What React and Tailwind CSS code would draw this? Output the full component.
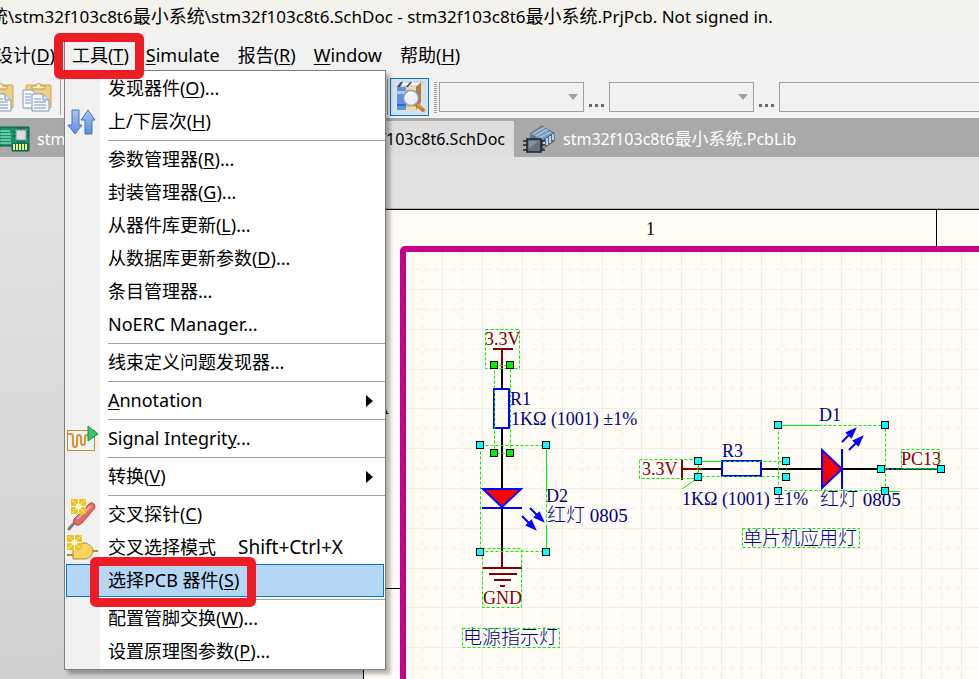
import React from "react";

const sans = "font-['Noto_Sans','Noto_Sans_CJK_SC',sans-serif]";

function PasteIcon() {
  return (
    <svg width="30" height="30" viewBox="0 0 30 30" aria-hidden="true">
      <rect x="4" y="3" width="25" height="23" rx="1" fill="#ecd27e" stroke="#cda94e" />
      <path d="M10 7V4h4a2.500 2.500 0 0 1 5 0h4v3z" fill="#f8edc4" stroke="#b99a50" />
      <path d="M1 8h9l4 4v14H1z" fill="#f6f9fd" stroke="#8496b8" />
      <path d="M3 12h6M3 15h6M3 18h6M3 21h6" stroke="#7d93b8" />
      <path d="M10 12h11l6 6v11H10z" fill="#f3f8fe" stroke="#8496b8" />
      <path d="M21 12v6h6" fill="#d5e2f4" stroke="#8496b8" />
      <path d="M12 17h7M12 20h12M12 23h12M12 26h12" stroke="#7d93b8" />
    </svg>
  );
}

function BooksIcon() {
  return (
    <svg width="32" height="32" viewBox="0 0 32 32" aria-hidden="true">
      <path d="M3 5l4-4h22l-3 4z" fill="#fff" stroke="#b9c4d2" />
      <path d="M22 6l5-5v20l-5 8z" fill="#b07a40" />
      <rect x="3" y="6" width="9" height="23" fill="#5f93dd" />
      <path d="M3 6l4-5h2l-3 5zM12 6l4-5h2l-4 5z" fill="#334a66" />
      <rect x="3" y="10" width="9" height="3" fill="#a9caf5" />
      <rect x="3" y="23" width="9" height="2" fill="#2b66c4" />
      <rect x="12" y="6" width="10" height="23" fill="#f1dc98" />
      <path d="M12 10h10M12 12h10M12 25h10" stroke="#c9a653" />
      <path d="M22 23l7 6" stroke="#c77b24" strokeWidth="4" strokeLinecap="round" />
      <path d="M23 23l5 4" stroke="#f5b65b" strokeWidth="1" />
      <circle cx="17" cy="17" r="7.500" fill="#e9f4fe" stroke="#8fa0b4" strokeWidth="1.500" />
      <path d="M12 16a5 5 0 0 1 6-4" stroke="#fff" strokeWidth="2" fill="none" />
    </svg>
  );
}

function BoardIcon() {
  return (
    <svg width="30" height="26" viewBox="0 0 30 26" className="shrink-0" aria-hidden="true">
      <path d="M0 1h29v24H12v-5H0z" fill="#12956a" stroke="#0a5d43" />
      <path d="M0 5h10M0 8h11M0 11h11M0 14h11M0 17h11" stroke="#c4f1da" />
      <path d="M18 1v4M21 1v4M24 1v4M18 13v4M21 13v4M24 13v4M13 6h3M13 10h3M26 6h3M26 10h3" stroke="#07503a" />
      <rect x="16" y="4" width="10" height="10" fill="#d9dde0" stroke="#8a9297" />
      <rect x="12" y="17" width="17" height="8" fill="#0b6e4e" />
      <path d="M14 18v6M17 18v6M20 18v6M23 18v6M26 18v6" stroke="#f1ef8b" strokeWidth="2" />
    </svg>
  );
}

function LibraryIcon() {
  return (
    <svg width="34" height="28" viewBox="0 0 34 28" aria-hidden="true">
      <path d="M8 9l12-8 12 7-12 8z" fill="#7f9db4" stroke="#4f6a80" />
      <path d="M11 9l12-7M14 11l12-7M17 13l12-6" stroke="#b9d0e0" />
      <path d="M20 16l12-8v8l-12 8z" fill="#5c7a92" stroke="#3d5567" />
      <path d="M22 15v7M25 13v7M28 11v7M31 9v6" stroke="#d9edf8" strokeWidth="1.500" />
      <path d="M8 9v5l12 4v-2z" fill="#5c7a92" />
      <path d="M1 16h22M1 20h22M1 25h22" stroke="#1d2226" strokeWidth="1.500" />
      <rect x="5" y="14" width="14" height="13" fill="#65727c" stroke="#1d2226" strokeWidth="1.500" />
      <path d="M7 16h10l-10 7z" fill="#87949d" />
    </svg>
  );
}

function LevelsIcon() {
  return (
    <svg width="30" height="28" viewBox="0 0 30 28" aria-hidden="true">
      <defs>
        <linearGradient id="arrows" x1="0" y1="0" x2="0" y2="1">
          <stop offset="0" stopColor="#a8c4f0" />
          <stop offset="1" stopColor="#5b8de0" />
        </linearGradient>
      </defs>
      <path d="M5 2h7v15h3l-7 9-7-9h4z" fill="url(#arrows)" stroke="#4a72b8" />
      <path d="M18 26V12h-4l7-10 7 10h-3v14z" fill="url(#arrows)" stroke="#4a72b8" />
    </svg>
  );
}

function SignalIcon() {
  return (
    <svg width="32" height="28" viewBox="0 0 32 28" aria-hidden="true">
      <rect x="1.500" y="5.500" width="27" height="20" fill="#eef2f6" stroke="#cf8a2e" />
      <path d="M2 9h3q2 0 2 3v7q0 3 2 3t2-3v-6q0-3 2-3t2 3v4q0 3 2 3t2-3v-4q0-3 2-3t2 2h5" fill="none" stroke="#d4942e" strokeWidth="2" />
      <path d="M22 1l10 8-10 7z" fill="#35c768" stroke="#1b8f44" />
    </svg>
  );
}

function Spark() {
  return (
    <g>
      <rect width="15" height="15" fill="#e6c52e" />
      <path d="M1 1l13 13M14 1L1 14" stroke="#f9eb9c" />
      <path d="M7.500 0v15M0 7.500h15" stroke="#fffbe0" />
      <circle cx="7.500" cy="7.500" r="3" fill="#fff8cf" />
    </g>
  );
}

function ProbeIcon() {
  return (
    <svg width="30" height="32" viewBox="0 0 30 32" aria-hidden="true">
      <path d="M2 30l6-7" stroke="#7d7d7d" strokeWidth="3" strokeLinecap="round" />
      <path d="M7 20L22 5q3-3 5 0t0 5L15 24q-3 3-6 2-4-2-2-6z" fill="#e46a66" stroke="#b8443f" />
      <path d="M10 20L24 7" stroke="#f7aaa5" strokeWidth="2" />
      <g transform="translate(4 0)"><Spark /></g>
    </svg>
  );
}

function GateIcon() {
  return (
    <svg width="32" height="30" viewBox="0 0 32 30" aria-hidden="true">
      <path d="M1 22h6M25 18h7" stroke="#b58a2c" strokeWidth="2" />
      <path d="M7 10h13q7 3 7 8t-7 8H7z" fill="#fbd561" stroke="#b58a2c" />
      <g transform="translate(1 2)"><Spark /></g>
    </svg>
  );
}

/* Window captions set Latin letters one pixel smaller than Han characters. */
function Caption({ parts, han }) {
  return parts.map((part, i) =>
    i % 2 ? <span key={i} className={han}>{part}</span> : part
  );
}

function Hot({ text, k, tail = "" }) {
  return (
    <span className="whitespace-pre">
      {text}
      {k && <u className="decoration-1 underline-offset-2">{k}</u>}
      {tail}
    </span>
  );
}

const groups = [
  [
    { text: "发现器件(", k: "O", tail: ")..." },
    { text: "上/下层次(", k: "H", tail: ")", icon: <LevelsIcon /> },
  ],
  [
    { text: "参数管理器(", k: "R", tail: ")..." },
    { text: "封装管理器(", k: "G", tail: ")..." },
    { text: "从器件库更新(", k: "L", tail: ")..." },
    { text: "从数据库更新参数(", k: "D", tail: ")..." },
    { text: "条目管理器..." },
    { text: "NoERC Manager..." },
  ],
  [{ text: "线束定义问题发现器..." }],
  [{ text: "", k: "A", tail: "nnotation", sub: true }],
  [{ text: "Signal Integrit", k: "y", tail: "...", icon: <SignalIcon /> }],
  [{ text: "转换(", k: "V", tail: ")", sub: true }],
  [
    { text: "交叉探针(", k: "C", tail: ")", icon: <ProbeIcon /> },
    { text: "交叉选择模式", icon: <GateIcon />, keys: "Shift+Ctrl+X" },
    { text: "选择PCB 器件(", k: "S", tail: ")", active: true },
  ],
  [
    { text: "配置管脚交换(", k: "W", tail: ")..." },
    { text: "设置原理图参数(", k: "P", tail: ")..." },
  ],
];

function MenuItem({ item }) {
  return (
    <button
      role="menuitem"
      className={
        "relative flex h-[33px] w-full items-center px-px text-left " +
        (item.active ? "bg-[#0078d7] bg-[linear-gradient(#b3d7f5,#b3d7f5)] bg-clip-content outline-1 -outline-offset-1 outline-transparent" : "")
      }
    >
      {item.active && <span className="absolute inset-x-px inset-y-0 border border-[#0078d7]" />}
      <span className="flex w-[33px] shrink-0 justify-center">{item.icon}</span>
      <span className="flex flex-1 items-center gap-[22px] pb-0.5 pl-[9px]">
        <Hot text={item.text} k={item.k} tail={item.tail} />
        {item.keys && <kbd className={"text-[19px] leading-7 " + sans}>{item.keys}</kbd>}
      </span>
      {item.sub && (
        <svg width="7" height="12" viewBox="0 0 7 12" className="mr-[11px]" aria-hidden="true">
          <path d="M0 0l7 6-7 6z" fill="#000" />
        </svg>
      )}
      {item.active && (
        <span className="absolute -top-[7px] left-[25px] h-[50px] w-[166px] rounded-md border-[9px] border-[#ee1c25]" />
      )}
    </button>
  );
}

function ToolsMenu() {
  return (
    <div
      role="menu"
      className="absolute top-full -left-px w-[322px] border border-[#808080] bg-[linear-gradient(to_right,#f1f1f1_35px,#ffffff_35px)] py-px shadow-[4px_4px_4px_rgba(0,0,0,0.3)]"
    >
      {groups.map((group, i) => (
        <React.Fragment key={i}>
          {i > 0 && (
            <div role="separator" className="ml-[43px] h-[5px] pt-[2px]">
              <div className="h-px bg-[#a0a0a0]" />
            </div>
          )}
          {group.map((item) => <MenuItem key={item.text + item.k} item={item} />)}
        </React.Fragment>
      ))}
    </div>
  );
}

function MenuBar() {
  return (
    <nav className="relative z-10 flex h-[42px] items-start bg-[#f1f1f1] text-lg leading-7">
      <div className="-ml-[5px] pt-[7px]">
        <button><Hot text="设计(" k="D" tail=")" /></button>
      </div>
      <div className="relative ml-[9px] h-[36px] border-l border-[#808080] pt-[7px] pl-[7px]">
        <button><Hot text="工具(" k="T" tail=")" /></button>
        <ToolsMenu />
        <span className="absolute -top-px -left-[11px] h-[46px] w-[90px] rounded-md border-[9px] border-[#ee1c25]" />
      </div>
      <div className="ml-[17px] flex gap-[18px] pt-[7px]">
        <button><Hot text="" k="S" tail="imulate" /></button>
        <button><Hot text="报告(" k="R" tail=")" /></button>
        <button><Hot text="" k="W" tail="indow" /></button>
        <button><Hot text="帮助(" k="H" tail=")" /></button>
      </div>
    </nav>
  );
}

function Combo({ label, grow }) {
  return (
    <div className={"relative h-[30px] " + (grow ? "-mr-10 flex-1" : "w-[145px]")}>
      <select aria-label={label} className="h-full w-full appearance-none border border-[#a0a0a0] bg-[#f1f1f1]" />
      <svg width="10" height="6" viewBox="0 0 10 6" className="pointer-events-none absolute top-3 right-1.5" aria-hidden="true">
        <path d="M0 0h10L5 6z" fill="#a0a0a0" />
      </svg>
    </div>
  );
}

function More() {
  return (
    <button aria-label="more" className="flex w-[25px] justify-center gap-[3px] pt-4">
      <i className="size-[3px] bg-[#6a6a6a]" />
      <i className="size-[3px] bg-[#6a6a6a]" />
      <i className="size-[3px] bg-[#6a6a6a]" />
    </button>
  );
}

function Toolbar() {
  return (
    <div className="flex h-[42px] items-center bg-[#f2f2f2]">
      <button aria-label="paste" className="-ml-4"><PasteIcon /></button>
      <button aria-label="smart paste" className="ml-2"><PasteIcon /></button>
      <i className="ml-2 h-9 w-px bg-[#a0a0a0]" />
      <i className="ml-[326px] h-9 w-px bg-[#a0a0a0]" />
      <button aria-label="browse library" className="ml-[2px] flex h-[38px] w-[39px] items-center justify-center border border-[#0078d7] bg-[#d5e0ea]"><BooksIcon /></button>
      <i className="mr-[2px] ml-[5px] h-[31px] w-[3px] bg-[repeating-linear-gradient(#a0a0a0_0_1px,transparent_1px_2px)]" />
      <Combo label="filter" />
      <More />
      <Combo label="scope" />
      <More />
      <Combo label="query" grow />
    </div>
  );
}

function Tabs() {
  return (
    <div role="tablist" className="flex h-[39px] items-stretch bg-[#a9a9a9] pt-[3px] text-base text-white">
      <button role="tab" className="flex w-[230px] items-center gap-[7px] whitespace-nowrap">
        <BoardIcon />stm32f103c8t6.PcbDoc
      </button>
      <button role="tab" aria-selected="true" className="flex w-[284px] items-center justify-end bg-[#dedede] pr-[9px] text-black">
        stm32f103c8t6.SchDoc
      </button>
      <button role="tab" className="flex items-center gap-[7px] pl-2 whitespace-nowrap">
        <LibraryIcon />
        <span><Caption han="text-[17px]" parts={["stm32f103c8t6", "最小系统", ".PcbLib"]} /></span>
      </button>
    </div>
  );
}

const steps = Array.from({ length: 60 }, (_, i) => i);

function Handles({ at, fill }) {
  return at.map(([x, y]) => (
    <rect key={x + "," + y} x={x - 3.5} y={y - 3.5} width="7" height="7" fill={fill} stroke="#000" />
  ));
}

function Sel({ x, y, w, h }) {
  return <rect x={x + 0.5} y={y + 0.5} width={w} height={h} fill="none" stroke="#00f000" strokeDasharray="3 2" />;
}

function Ray({ x, y, turn }) {
  return (
    <g transform={`translate(${x} ${y}) rotate(${turn})`}>
      <path d="M0 0h12" stroke="#0000ff" strokeWidth="2" />
      <path d="M9-4.500l12 4.500-12 4.500z" fill="#0000ff" />
    </g>
  );
}

function Sheet() {
  return (
    <svg className="block h-full min-w-0 flex-1 bg-[#fffcf6] font-['Liberation_Serif','Noto_Sans_CJK_SC',serif] text-lg font-light" role="img" aria-label="schematic">
      <g transform="translate(-363 -209)">
        {steps.map((i) => {
          const x = Math.round(422 + i * 19.95) + 0.5;
          const y = Math.round(269 + i * 19.9) + 0.5;
          const dash = i % 2 ? undefined : "5 4";
          return (
            <g key={i} stroke="#eeeeea" strokeDasharray={dash}>
              <path d={`M${x} 252V2000`} />
              <path d={`M406 ${y}H2600`} />
            </g>
          );
        })}
        <path d="M363 209.500H2600M363.500 209V2000M936.500 209v38M363 588.500h38" stroke="#000" fill="none" />
        <rect x="403" y="249" width="2200" height="1700" rx="2" fill="none" stroke="#c6008c" strokeWidth="6" />
        <text x="646" y="235">1</text>
        <text x="376" y="414">A</text>

        <g fill="none" strokeWidth="2">
          <path d="M502 368v21M502 428v61M502 508v42" stroke="#000" />
          <path d="M702 469h20M761 469h61M842 469h39" stroke="#000" />
          <path d="M493 349h20M502 349v20M502 550v18M482 568h40M489 574h28M494 580h17M500 586h5M682 460v20M682 469h20" stroke="#800000" />
          <rect x="494" y="389" width="15" height="39" stroke="#0000ff" />
          <rect x="722" y="461" width="39" height="15" stroke="#0000ff" />
          <path d="M483 489h38l-19 18z" fill="#ff0000" stroke="#0000ff" />
          <path d="M482 508h40" stroke="#0000ff" />
          <path d="M822 450v38l20-19z" fill="#ff0000" stroke="#0000ff" />
          <path d="M842 449v40" stroke="#0000ff" />
          <path d="M881 469h60" stroke="#000080" />
          <path d="M881 469h60" stroke="#00f000" strokeDasharray="3 2" strokeWidth="1" />
        </g>
        <Ray x={530} y={508} turn={45} />
        <Ray x={522} y={516} turn={45} />
        <Ray x={842} y={442} turn={-45} />
        <Ray x={849} y={450} turn={-45} />

        <g fill="#800000">
          <text x="485" y="345">3.3V</text>
          <text x="483" y="604">GND</text>
          <text x="642" y="475">3.3V</text>
          <text x="901" y="465">PC13</text>
        </g>
        <g fill="#000080">
          <text x="510" y="405">R1</text>
          <text x="511" y="425">1KΩ (1001) ±1%</text>
          <text x="546" y="502">D2</text>
          <text x="547" y="522" className="text-[19px]">红灯 0805</text>
          <text x="463" y="644" className="text-[19px]">电源指示灯</text>
          <text x="722" y="457">R3</text>
          <text x="819" y="421">D1</text>
          <text x="682" y="505">1KΩ (1001) ±1%</text>
          <text x="820" y="506" className="text-[19px]">红灯 0805</text>
          <text x="743" y="545" className="text-[19px]">单片机应用灯</text>
        </g>

        <Sel x={485} y={329} w={34} h={39} />
        <Sel x={494} y={365} w={16} h={88} />
        <Sel x={480} y={445} w={66} h={106} />
        <Sel x={482} y={548} w={39} h={59} />
        <Sel x={462} y={628} w={97} h={19} />
        <Sel x={639} y={459} w={58} h={19} />
        <Sel x={698} y={461} w={88} h={15} />
        <Sel x={778} y={425} w={107} h={65} />
        <Sel x={901} y={449} w={38} h={19} />
        <Sel x={742} y={528} w={117} h={19} />
        <path d="M546.500 450v40M546.500 527v22M700 461.500h22M782 425.500h40M682 489l16-11M889 491.500h11" stroke="#00f000" fill="none" />
        <Handles fill="#00f000" at={[[494, 365], [510, 365], [494, 453], [510, 453]]} />
        <Handles
          fill="#00ffff"
          at={[
            [480, 445], [546, 445], [480, 552], [546, 552],
            [698, 461], [786, 461], [698, 477], [786, 477],
            [778, 425], [885, 425], [778, 491], [885, 491],
            [881, 469], [941, 469],
          ]}
        />
      </g>
    </svg>
  );
}

export default function App() {
  return (
    <div className={"flex h-screen flex-col overflow-hidden bg-[#e2e2e2] text-black " + sans}>
      <header className="flex h-[34px] shrink-0 items-center bg-[#f4f2ed] pb-0.5">
        <h1 className="-ml-[10px] text-[17px] whitespace-nowrap">
          <Caption
            han="text-lg"
            parts={["", "统", "\\stm32f103c8t6", "最小系统", "\\stm32f103c8t6.SchDoc - stm32f103c8t6", "最小系统", ".PrjPcb. Not signed in."]}
          />
        </h1>
      </header>
      <MenuBar />
      <Toolbar />
      <Tabs />
      <div className="flex h-[52px] shrink-0 items-end bg-[#e2e2e2]">
        <div className="ml-[363px] h-px flex-1 bg-[#b5b5b5]" />
      </div>
      <main className="flex min-h-0 flex-1">
        <div className="w-[363px] shrink-0 bg-linear-to-b from-[#e2e2e2] to-[#d0d0d0]" />
        <Sheet />
      </main>
    </div>
  );
}
